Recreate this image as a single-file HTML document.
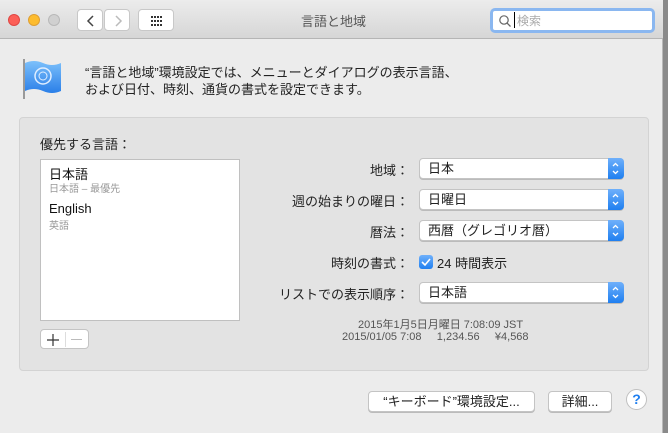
<!DOCTYPE html>
<html><head><meta charset="utf-8"><style>
*{box-sizing:border-box;margin:0;padding:0}
body{width:668px;height:433px;background:#8a8a8a;font-family:"Liberation Sans","Noto Sans CJK JP",sans-serif;overflow:hidden;position:relative}
.win{position:absolute;left:0;top:0;width:663px;height:433px;background:#ececec;border-right:1px solid #b8b8b8}
.tb{position:absolute;left:0;top:0;width:663px;height:39px;background:linear-gradient(#ececec,#d6d6d6);border-bottom:1px solid #b5b5b5}
.dot{position:absolute;top:14px;width:12px;height:12px;border-radius:50%}
.btn{position:absolute;background:#fff;border:1px solid #c8c8c8;border-radius:4px}
.abs{position:absolute;white-space:nowrap}
.pop{position:absolute;left:419px;width:205px;height:21px;background:#fff;border:1px solid #c4c4c4;border-radius:4px;font-size:13px;line-height:19px;padding-left:8px;color:#222;box-shadow:0 1px 0 #bbb}
.pop:after{content:"";position:absolute;right:-1px;top:-1px;width:16px;height:21px;background:linear-gradient(#6fb0fb,#1f7ff0);border-radius:0 4px 4px 0}
.pop svg{position:absolute;right:0;top:0;z-index:2}
.lbl{position:absolute;right:253px;font-size:13px;color:#222;white-space:nowrap}
.pb{position:absolute;background:#fff;border:1px solid #c4c4c4;border-radius:4px;font-size:13px;text-align:center;line-height:19px;height:21px;color:#222;box-shadow:0 1px 0 #bbb}
</style></head><body>
<div class="win">
<div class="tb">
<div class="dot" style="left:8px;background:#fc5f57;border:1px solid #df4744"></div>
<div class="dot" style="left:28px;background:#fdbc2e;border:1px solid #de9f34"></div>
<div class="dot" style="left:48px;background:#d0d0d0;border:1px solid #b8b8b8"></div>
<div class="btn" style="left:77px;top:9px;width:26px;height:22px"><svg width="26" height="22"><path d="M15 6l-5 5 5 5" stroke="#444" stroke-width="1.5" fill="none"/></svg></div>
<div class="btn" style="left:104px;top:9px;width:26px;height:22px"><svg width="26" height="22"><path d="M11 6l5 5-5 5" stroke="#bbb" stroke-width="1.5" fill="none"/></svg></div>
<div class="btn" style="left:138px;top:9px;width:36px;height:22px"><svg width="36" height="22"><g fill="#333"><rect x="12" y="6" width="2" height="2"/><rect x="15" y="6" width="2" height="2"/><rect x="18" y="6" width="2" height="2"/><rect x="21" y="6" width="2" height="2"/><rect x="12" y="10" width="2" height="2"/><rect x="15" y="10" width="2" height="2"/><rect x="18" y="10" width="2" height="2"/><rect x="21" y="10" width="2" height="2"/><rect x="12" y="14" width="2" height="2"/><rect x="15" y="14" width="2" height="2"/><rect x="18" y="14" width="2" height="2"/><rect x="21" y="14" width="2" height="2"/></g></svg></div>
<div class="abs" style="left:301px;top:11px;font-size:13px;color:#555">言語と地域</div>
<div style="position:absolute;left:490px;top:8px;width:165px;height:25px;background:#fff;border:3px solid #8ab7f0;border-radius:5px">
<svg class="abs" style="left:5px;top:3px" width="14" height="14"><circle cx="6" cy="6" r="4.2" stroke="#666" stroke-width="1.2" fill="none"/><path d="M9 9l3.5 3.5" stroke="#666" stroke-width="1.3"/></svg>
<div class="abs" style="left:21px;top:1px;width:1px;height:16px;background:#000"></div>
<div class="abs" style="left:24px;top:1px;font-size:12px;color:#aaa">検索</div>
</div>
</div>
<svg class="abs" style="left:20px;top:57px" width="46" height="44"><rect x="3" y="2" width="2" height="40" fill="#999"/><defs><linearGradient id="g" x1="0" y1="0" x2="0" y2="1"><stop offset="0" stop-color="#7cc0fb"/><stop offset="1" stop-color="#2a7fe8"/></linearGradient></defs><path d="M5 6q9-4 18 0t18 0v28q-9 4-18 0t-18 0z" fill="url(#g)"/><circle cx="23" cy="19" r="8" fill="none" stroke="#e0eeff" stroke-width="1.5"/><circle cx="23" cy="19" r="4" fill="none" stroke="#e0eeff" stroke-width="1"/></svg>
<div class="abs" style="left:85px;top:64px;font-size:13px;line-height:17px;color:#222">“言語と地域”環境設定では、メニューとダイアログの表示言語、<br>および日付、時刻、通貨の書式を設定できます。</div>
<div style="position:absolute;left:19px;top:117px;width:630px;height:254px;background:#e3e3e3;border:1px solid #d3d3d3;border-radius:4px"></div>
<div class="abs" style="left:40px;top:134px;font-size:13px;color:#222">優先する言語：</div>
<div style="position:absolute;left:40px;top:159px;width:200px;height:162px;background:#fff;border:1px solid #c0c0c0">
<div class="abs" style="left:8px;top:4px;font-size:13px;color:#111">日本語</div>
<div class="abs" style="left:8px;top:20px;font-size:10px;color:#999">日本語 – 最優先</div>
<div class="abs" style="left:8px;top:41px;font-size:13px;color:#111">English</div>
<div class="abs" style="left:8px;top:57px;font-size:10px;color:#999">英語</div>
</div>
<div class="btn" style="left:40px;top:329px;width:49px;height:20px;border-color:#c4c4c4">
<div class="abs" style="left:24px;top:2px;width:1px;height:15px;background:#ddd"></div>
<svg class="abs" style="left:5px;top:3px" width="14" height="14"><path d="M7 1v12M1 7h12" stroke="#333" stroke-width="1.2"/></svg>
<div class="abs" style="left:30px;top:9px;width:11px;height:1px;background:#bbb"></div>
</div>
<div class="lbl" style="top:160px">地域：</div>
<div class="pop" style="top:158px">日本<svg width="15" height="19"><path d="M5 7l2.5-2.5L10 7M5 12l2.5 2.5L10 12" stroke="#fff" stroke-width="1.3" fill="none"/></svg></div>
<div class="lbl" style="top:191px">週の始まりの曜日：</div>
<div class="pop" style="top:189px">日曜日<svg width="15" height="19"><path d="M5 7l2.5-2.5L10 7M5 12l2.5 2.5L10 12" stroke="#fff" stroke-width="1.3" fill="none"/></svg></div>
<div class="lbl" style="top:222px">暦法：</div>
<div class="pop" style="top:220px">西暦（グレゴリオ暦）<svg width="15" height="19"><path d="M5 7l2.5-2.5L10 7M5 12l2.5 2.5L10 12" stroke="#fff" stroke-width="1.3" fill="none"/></svg></div>
<div class="lbl" style="top:253px">時刻の書式：</div>
<div style="position:absolute;left:419px;top:255px;width:14px;height:14px;background:linear-gradient(#6fb0fb,#1f7ff0);border-radius:3px"><svg width="14" height="14"><path d="M3 7l3 3 5-6" stroke="#fff" stroke-width="1.6" fill="none"/></svg></div>
<div class="abs" style="left:437px;top:253px;font-size:13px;color:#222">24 時間表示</div>
<div class="lbl" style="top:284px">リストでの表示順序：</div>
<div class="pop" style="top:282px">日本語<svg width="15" height="19"><path d="M5 7l2.5-2.5L10 7M5 12l2.5 2.5L10 12" stroke="#fff" stroke-width="1.3" fill="none"/></svg></div>
<div class="abs" style="left:358px;top:316px;font-size:11px;color:#555">2015年1月5日月曜日 7:08:09 JST</div>
<div class="abs" style="left:342px;top:331px;font-size:11px;color:#555">2015/01/05 7:08 &nbsp;&nbsp;&nbsp; 1,234.56 &nbsp;&nbsp;&nbsp; ¥4,568</div>
<div class="pb" style="left:368px;top:391px;width:167px">“キーボード”環境設定...</div>
<div class="pb" style="left:548px;top:391px;width:64px">詳細...</div>
<div style="position:absolute;left:626px;top:389px;width:21px;height:21px;border-radius:50%;background:#fff;border:1px solid #c0c0c0;color:#1f7ff0;font-size:14px;text-align:center;line-height:19px;font-weight:bold">?</div>
</div>
</body></html>
